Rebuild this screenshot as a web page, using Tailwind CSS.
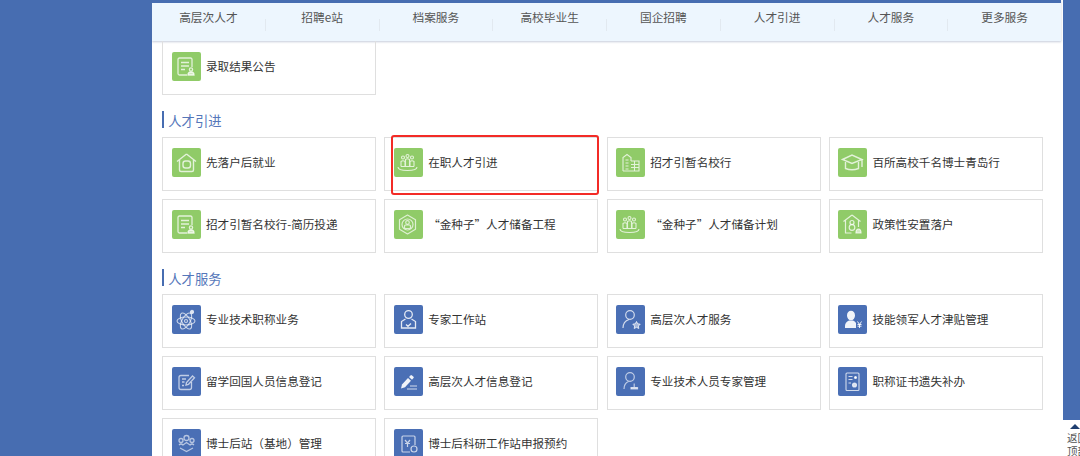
<!DOCTYPE html>
<html lang="zh-CN">
<head>
  <meta charset="UTF-8" />
  <title>人才服务</title>
  <script src="https://cdn.jsdelivr.net/npm/@tailwindcss/browser@4"></script>
</head>
<body class="bg-[#476db1] font-['Noto_Sans_CJK_SC','Noto_Sans',sans-serif] text-[#333]">
  <div class="flex h-[456px] w-[1080px] overflow-hidden">
    <div class="w-[152px] shrink-0"></div>

    <main class="relative w-[911px] shrink-0 bg-white">
      <!-- top nav -->
      <nav class="flex h-[41px] w-[909px] items-start border-t-[3px] border-[#476db1] bg-[#edf6fe] text-[11.7px] leading-[16px] text-[#555] shadow-[0_1px_2px_rgba(90,110,150,0.35)]">
        <a class="flex-1 pt-[6px] text-center">高层次人才</a>
        <span class="mt-[16px] h-[12px] w-px bg-[#e2e9f0]"></span>
        <a class="flex-1 pt-[6px] text-center">招聘e站</a>
        <span class="mt-[16px] h-[12px] w-px bg-[#e2e9f0]"></span>
        <a class="flex-1 pt-[6px] text-center">档案服务</a>
        <span class="mt-[16px] h-[12px] w-px bg-[#e2e9f0]"></span>
        <a class="flex-1 pt-[6px] text-center">高校毕业生</a>
        <span class="mt-[16px] h-[12px] w-px bg-[#e2e9f0]"></span>
        <a class="flex-1 pt-[6px] text-center">国企招聘</a>
        <span class="mt-[16px] h-[12px] w-px bg-[#e2e9f0]"></span>
        <a class="flex-1 pt-[6px] text-center">人才引进</a>
        <span class="mt-[16px] h-[12px] w-px bg-[#e2e9f0]"></span>
        <a class="flex-1 pt-[6px] text-center">人才服务</a>
        <span class="mt-[16px] h-[12px] w-px bg-[#e2e9f0]"></span>
        <a class="flex-1 pt-[6px] text-center">更多服务</a>
      </nav>

      <div class="pl-[10.3px] text-[11.6px] leading-[16px]">
        <!-- previous section, scrolled under the nav -->
        <div class="grid grid-cols-[repeat(4,214px)] gap-x-[8.15px]">
          <a class="flex h-[54px] items-start gap-[5px] border border-t-0 border-[#dfdfdf] pl-[8.7px] pt-[11px]">
            <span class="flex h-[29px] w-[29px] shrink-0 items-center justify-center rounded-[2px] bg-[#90cb68]">
              <svg viewBox="0 0 29 29" class="h-[29px] w-[29px]" fill="none" stroke="#fff" stroke-opacity=".75" stroke-width="1.3"><path d="M20 15V7.500q0-1.500-1.500-1.500h-11Q6 6 6 7.500v14Q6 23 7.500 23H15M9 10.500h8M9 14h8M9 17.500h4"/><circle cx="19" cy="17.500" r="1.600"/><path d="M16 23q0-3 3-3t3 3z" fill="#fff" fill-opacity=".6"/></svg>
            </span>
            <span class="mt-[6px]">录取结果公告</span>
          </a>
        </div>

        <h2 class="mb-[9px] mt-[16px] h-[17px] border-l-2 border-[#476db1] pl-[4px] pt-px text-[13.3px] leading-[17px] font-normal text-[#5577ba]">人才引进</h2>
        <div class="grid grid-cols-[repeat(4,214px)] gap-x-[8.15px] gap-y-[8.5px]">
          <a class="flex h-[53.5px] items-start gap-[5px] border border-[#dfdfdf] pl-[8.7px] pt-[9.5px]">
            <span class="h-[29px] w-[29px] shrink-0 rounded-[2px] bg-[#90cb68]">
              <svg viewBox="0 0 29 29" class="h-[29px] w-[29px]" fill="none" stroke="#fff" stroke-opacity=".75" stroke-width="1.4"><path d="M14.500 6 5 13.500M14.500 6 24 13.500M7.500 12v10q0 1.500 1.500 1.500h11q1.500 0 1.500-1.500V12"/><rect x="11" y="13" width="7.500" height="7" rx="2.500"/></svg>
            </span>
            <span class="mt-[6px]">先落户后就业</span>
          </a>
          <a class="flex h-[53.5px] items-start gap-[5px] border border-[#dfdfdf] pl-[8.7px] pt-[9.5px]">
            <span class="h-[29px] w-[29px] shrink-0 rounded-[2px] bg-[#90cb68]">
              <svg viewBox="0 0 29 29" class="h-[29px] w-[29px]" fill="none" stroke="#fff" stroke-opacity=".75" stroke-width="1.1"><circle cx="9" cy="9.500" r="1.500"/><circle cx="13.500" cy="8" r="1.500"/><circle cx="18" cy="9.500" r="1.500"/><path d="M7 18.500v-5q2-1.500 4 0v5M11.500 18.500v-7q2-1.500 4 0v7M16 18.500v-5q2-1.500 4 0v5M7 18.500h13"/><path d="M4 19q0 3.500 9.500 3.500T23 19"/></svg>
            </span>
            <span class="mt-[6px]">在职人才引进</span>
          </a>
          <a class="flex h-[53.5px] items-start gap-[5px] border border-[#dfdfdf] pl-[8.7px] pt-[9.5px]">
            <span class="h-[29px] w-[29px] shrink-0 rounded-[2px] bg-[#90cb68]">
              <svg viewBox="0 0 29 29" class="h-[29px] w-[29px]" fill="none" stroke="#fff" stroke-opacity=".75" stroke-width="1.1"><path d="M7 23V9.500l4-3 4 3V13M15 13h8v10H7M9.500 12h3M9.500 15h3M9.500 18h3M9.500 21h3M15 16.500h8M15 19.500h8M18.500 13v10"/></svg>
            </span>
            <span class="mt-[6px]">招才引暂名校行</span>
          </a>
          <a class="flex h-[53.5px] items-start gap-[5px] border border-[#dfdfdf] pl-[8.7px] pt-[9.5px]">
            <span class="h-[29px] w-[29px] shrink-0 rounded-[2px] bg-[#90cb68]">
              <svg viewBox="0 0 29 29" class="h-[29px] w-[29px]" fill="none" stroke="#fff" stroke-opacity=".75" stroke-width="1.4"><path d="M4.500 11.500 14 7l10 4.500-10 4z"/><path d="M7.500 14v6.500q6.500 2.500 13 0V14M24 11.500V19"/></svg>
            </span>
            <span class="mt-[6px]">百所高校千名博士青岛行</span>
          </a>

          <a class="flex h-[53.5px] items-start gap-[5px] border border-[#dfdfdf] pl-[8.7px] pt-[9.5px]">
            <span class="h-[29px] w-[29px] shrink-0 rounded-[2px] bg-[#90cb68]">
              <svg viewBox="0 0 29 29" class="h-[29px] w-[29px]" fill="none" stroke="#fff" stroke-opacity=".75" stroke-width="1.3"><path d="M20 15V7.500q0-1.500-1.500-1.500h-11Q6 6 6 7.500v14Q6 23 7.500 23H15M9 10.500h8M9 14h8M9 17.500h4"/><circle cx="19" cy="17.500" r="1.600"/><path d="M16 23q0-3 3-3t3 3z" fill="#fff" fill-opacity=".6"/></svg>
            </span>
            <span class="mt-[6px]">招才引暂名校行-简历投递</span>
          </a>
          <a class="flex h-[53.5px] items-start gap-[5px] border border-[#dfdfdf] pl-[8.7px] pt-[9.5px]">
            <span class="h-[29px] w-[29px] shrink-0 rounded-[2px] bg-[#90cb68]">
              <svg viewBox="0 0 29 29" class="h-[29px] w-[29px]" fill="none" stroke="#fff" stroke-opacity=".7" stroke-width="1.2"><path d="M13.500 5 21.500 9.700V19.300L13.500 24 5.500 19.300V9.700z" stroke-linejoin="round"/><circle cx="13.500" cy="14.500" r="5.500"/><circle cx="13.500" cy="12.500" r="1.800"/><rect x="10.500" y="15" width="6" height="3.500" rx="1"/></svg>
            </span>
            <span class="mt-[6px]">“金种子”人才储备工程</span>
          </a>
          <a class="flex h-[53.5px] items-start gap-[5px] border border-[#dfdfdf] pl-[8.7px] pt-[9.5px]">
            <span class="h-[29px] w-[29px] shrink-0 rounded-[2px] bg-[#90cb68]">
              <svg viewBox="0 0 29 29" class="h-[29px] w-[29px]" fill="none" stroke="#fff" stroke-opacity=".75" stroke-width="1.1"><circle cx="9" cy="9.500" r="1.500"/><circle cx="13.500" cy="8" r="1.500"/><circle cx="18" cy="9.500" r="1.500"/><path d="M7 18.500v-5q2-1.500 4 0v5M11.500 18.500v-7q2-1.500 4 0v7M16 18.500v-5q2-1.500 4 0v5M7 18.500h13"/><path d="M4 19q0 3.500 9.500 3.500T23 19"/></svg>
            </span>
            <span class="mt-[6px]">“金种子”人才储备计划</span>
          </a>
          <a class="flex h-[53.5px] items-start gap-[5px] border border-[#dfdfdf] pl-[8.7px] pt-[9.5px]">
            <span class="h-[29px] w-[29px] shrink-0 rounded-[2px] bg-[#90cb68]">
              <svg viewBox="0 0 29 29" class="h-[29px] w-[29px]" fill="none" stroke="#fff" stroke-opacity=".75" stroke-width="1.2"><path d="M14 5 5.500 11.500M14 5l8.500 6.500M7.500 10.500V23h6M20.500 10v7"/><circle cx="14" cy="12.500" r="2"/><circle cx="14" cy="17.500" r="2.800"/><path d="M18 23q0-4 2.500-4t2.500 4z" fill="#fff" fill-opacity=".6"/></svg>
            </span>
            <span class="mt-[6px]">政策性安置落户</span>
          </a>
        </div>

        <h2 class="mb-[8.5px] mt-[16px] h-[17px] border-l-2 border-[#476db1] pl-[4px] pt-px text-[13.3px] leading-[17px] font-normal text-[#5577ba]">人才服务</h2>
        <div class="grid grid-cols-[repeat(4,214px)] gap-x-[8.15px] gap-y-[8.5px]">
          <a class="flex h-[53.5px] items-start gap-[5px] border border-[#dfdfdf] pl-[8.7px] pt-[9.5px]">
            <span class="h-[29px] w-[29px] shrink-0 rounded-[2px] bg-[#4a6fb5]">
              <svg viewBox="0 0 29 29" class="h-[29px] w-[29px]" fill="none" stroke="#fff" stroke-opacity=".7" stroke-width="1.1"><ellipse cx="14" cy="16" rx="9" ry="4"/><ellipse cx="14" cy="16" rx="9" ry="4" transform="rotate(60 14 16)"/><ellipse cx="14" cy="16" rx="9" ry="4" transform="rotate(120 14 16)"/><circle cx="14" cy="16" r="1.500"/><circle cx="20" cy="7" r="1.600" fill="#fff" fill-opacity=".8"/></svg>
            </span>
            <span class="mt-[6px]">专业技术职称业务</span>
          </a>
          <a class="flex h-[53.5px] items-start gap-[5px] border border-[#dfdfdf] pl-[8.7px] pt-[9.5px]">
            <span class="h-[29px] w-[29px] shrink-0 rounded-[2px] bg-[#4a6fb5]">
              <svg viewBox="0 0 29 29" class="h-[29px] w-[29px]" fill="none" stroke="#fff" stroke-opacity=".85" stroke-width="1.3"><circle cx="14.500" cy="9.500" r="3.800"/><path d="M11.500 14 7.500 16.500V23h14v-6.500L17.500 14M12 19.500l2 1.800 3-2.800"/></svg>
            </span>
            <span class="mt-[6px]">专家工作站</span>
          </a>
          <a class="flex h-[53.5px] items-start gap-[5px] border border-[#dfdfdf] pl-[8.7px] pt-[9.5px]">
            <span class="h-[29px] w-[29px] shrink-0 rounded-[2px] bg-[#4a6fb5]">
              <svg viewBox="0 0 29 29" class="h-[29px] w-[29px]" fill="none" stroke="#fff" stroke-opacity=".75" stroke-width="1.2"><circle cx="14" cy="10" r="4.300"/><path d="M7 23q0-6.500 6-8.500"/><path d="m20.500 16.500 1.200 2.300 2.500.4-1.800 1.800.4 2.500-2.300-1.200-2.300 1.200.4-2.500-1.800-1.800 2.500-.4z" stroke-width="1" fill="#fff" fill-opacity=".5"/></svg>
            </span>
            <span class="mt-[6px]">高层次人才服务</span>
          </a>
          <a class="flex h-[53.5px] items-start gap-[5px] border border-[#dfdfdf] pl-[8.7px] pt-[9.5px]">
            <span class="h-[29px] w-[29px] shrink-0 rounded-[2px] bg-[#4a6fb5]">
              <svg viewBox="0 0 29 29" class="h-[29px] w-[29px]" fill="#fff" fill-opacity=".92" stroke="none"><ellipse cx="13" cy="10.500" rx="4" ry="4.800"/><path d="M7 23v-2q0-4 4-5.500h4q2 .7 3 2.500v5z"/><path d="m19.500 16.500 2 3 2-3M19.500 19.500h4M19.500 21.200h4M21.500 19.500V23" fill="none" stroke="#fff" stroke-width=".9"/></svg>
            </span>
            <span class="mt-[6px]">技能领军人才津贴管理</span>
          </a>

          <a class="flex h-[53.5px] items-start gap-[5px] border border-[#dfdfdf] pl-[8.7px] pt-[9.5px]">
            <span class="h-[29px] w-[29px] shrink-0 rounded-[2px] bg-[#4a6fb5]">
              <svg viewBox="0 0 29 29" class="h-[29px] w-[29px]" fill="none" stroke="#fff" stroke-opacity=".65" stroke-width="1.3"><path d="M19.500 15v5.500q0 2-2 2H9q-2 0-2-2v-10q0-2 2-2h8M10 12h4M10 15h2.500M10 18.500h2"/><path d="m14 18 .5-2.500 6-6.500 2 1.800-6 6.500z"/></svg>
            </span>
            <span class="mt-[6px]">留学回国人员信息登记</span>
          </a>
          <a class="flex h-[53.5px] items-start gap-[5px] border border-[#dfdfdf] pl-[8.7px] pt-[9.5px]">
            <span class="h-[29px] w-[29px] shrink-0 rounded-[2px] bg-[#4a6fb5]">
              <svg viewBox="0 0 29 29" class="h-[29px] w-[29px]" fill="#fff" fill-opacity=".92"><path d="m7 21.500 1-4 6-6.500 3 2.800-6 6.500z"/><path d="m15 10 1.500-1.600q.8-.6 1.500 0l1.500 1.300q.6.7 0 1.400L18 12.800z"/><path d="M13 22h10M16 19h7" fill="none" stroke="#fff" stroke-width="1.200" stroke-opacity=".75"/></svg>
            </span>
            <span class="mt-[6px]">高层次人才信息登记</span>
          </a>
          <a class="flex h-[53.5px] items-start gap-[5px] border border-[#dfdfdf] pl-[8.7px] pt-[9.5px]">
            <span class="h-[29px] w-[29px] shrink-0 rounded-[2px] bg-[#4a6fb5]">
              <svg viewBox="0 0 29 29" class="h-[29px] w-[29px]" fill="none" stroke="#fff" stroke-opacity=".65" stroke-width="1.2"><circle cx="14" cy="10" r="4.300"/><path d="M8 22q0-5.500 4.500-7.500"/><path d="M18.200 16.500v3.500M15 20.500h6.500v1.500H15z" fill="#fff" fill-opacity=".7"/></svg>
            </span>
            <span class="mt-[6px]">专业技术人员专家管理</span>
          </a>
          <a class="flex h-[53.5px] items-start gap-[5px] border border-[#dfdfdf] pl-[8.7px] pt-[9.5px]">
            <span class="h-[29px] w-[29px] shrink-0 rounded-[2px] bg-[#4a6fb5]">
              <svg viewBox="0 0 29 29" class="h-[29px] w-[29px]" fill="none" stroke="#fff" stroke-opacity=".75" stroke-width="1.1"><rect x="8" y="6" width="13" height="17.500" rx="1"/><path d="M10.500 9.500h4M10.500 12.500h4M10.500 16h2.500"/><circle cx="17.500" cy="10.500" r="1" fill="#fff"/><circle cx="16.500" cy="18" r="2" fill="#fff" fill-opacity=".8"/></svg>
            </span>
            <span class="mt-[6px]">职称证书遗失补办</span>
          </a>

          <a class="flex h-[53.5px] items-start gap-[5px] border border-[#dfdfdf] pl-[8.7px] pt-[9.5px]">
            <span class="h-[29px] w-[29px] shrink-0 rounded-[2px] bg-[#4a6fb5]">
              <svg viewBox="0 0 29 29" class="h-[29px] w-[29px]" fill="none" stroke="#fff" stroke-opacity=".6" stroke-width="1.3"><circle cx="14.500" cy="9" r="2.500"/><circle cx="9" cy="11.500" r="2"/><circle cx="20" cy="11.500" r="2"/><path d="M7 16q2-2 4 0l3.500-2.500L18 16q2-2 4 0M8 19l6.500 3.500L21 19"/></svg>
            </span>
            <span class="mt-[6px]">博士后站（基地）管理</span>
          </a>
          <a class="flex h-[53.5px] items-start gap-[5px] border border-[#dfdfdf] pl-[8.7px] pt-[9.5px]">
            <span class="h-[29px] w-[29px] shrink-0 rounded-[2px] bg-[#4a6fb5]">
              <svg viewBox="0 0 29 29" class="h-[29px] w-[29px]" fill="none" stroke="#fff" stroke-opacity=".7" stroke-width="1.2"><path d="M16 23H9q-1 0-1-1V8q0-1 1-1h11q1 0 1 1v8"/><path d="M11 11l2.500 3 2.500-3M11 14.500h5M13.500 14.500V18"/><circle cx="20" cy="20" r="3"/></svg>
            </span>
            <span class="mt-[6px]">博士后科研工作站申报预约</span>
          </a>
        </div>
      </div>

      <!-- red annotation around 在职人才引进 -->
      <div class="absolute left-[238.7px] top-[135px] h-[59.5px] w-[208.7px] rounded-[3px] border-2 border-[#f32b26]"></div>
    </main>

    <!-- right strip and back-to-top -->
    <aside class="flex w-[17px] shrink-0 flex-col">
      <div class="h-[420px]"></div>
      <div class="flex h-[36px] flex-col bg-white pl-[4px] pt-[4px] text-[#555] whitespace-nowrap">
        <span class="ml-[3px] h-0 w-0 border-x-[5px] border-b-[5px] border-x-transparent border-b-[#1f3f70]"></span>
        <span class="mt-[3px] w-[24px] text-[10.5px] leading-[12.5px]">返回<br />顶部</span>
      </div>
    </aside>
  </div>
</body>
</html>
